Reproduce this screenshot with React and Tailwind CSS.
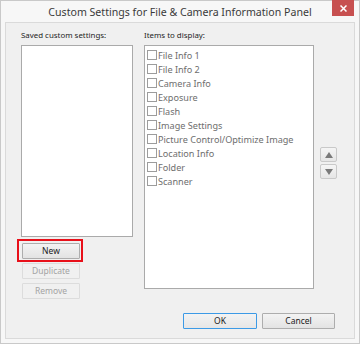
import React from 'react';

const items = [
  'File Info 1',
  'File Info 2',
  'Camera Info',
  'Exposure',
  'Flash',
  'Image Settings',
  'Picture Control/Optimize Image',
  'Location Info',
  'Folder',
  'Scanner',
];

const font = { fontFamily: '"Noto Sans", "Open Sans", sans-serif' };

function Btn({ children, disabled, primary, className = '' }) {
  return (
    <button
      className={`flex items-center justify-center h-[16px] text-[8.5px] leading-none border rounded-[1px]
        ${disabled
          ? 'border-[#dcdcdc] bg-[#f0f0f0] text-[#a3a3a3]'
          : primary
            ? 'border-[#3c9ae6] bg-gradient-to-b from-[#f3f3f3] to-[#e6e6e6] text-[#1a1a1a]'
            : 'border-[#adadad] bg-gradient-to-b from-[#f3f3f3] to-[#e3e3e3] text-[#1a1a1a]'} ${className}`}
    >
      {children}
    </button>
  );
}

export default function App() {
  return (
    <div className="w-[360px] h-[344px] bg-[#f7f7f7] border border-[#c9c9c9] flex flex-col select-none" style={font}>
      {/* Title bar */}
      <div className="relative h-[21px] shrink-0 flex items-center justify-center">
        <span className="text-[10.6px] text-[#3a3a3a] pt-[2px]">Custom Settings for File &amp; Camera Information Panel</span>
        <div className="absolute right-[5px] top-[-1px] w-[22px] h-[16px] bg-[#c75050] flex items-center justify-center">
          <svg width="7" height="7" viewBox="0 0 7 7">
            <path d="M0.5 0.5 L6.5 6.5 M6.5 0.5 L0.5 6.5" stroke="#fff" strokeWidth="1.5" />
          </svg>
        </div>
      </div>

      {/* Client area */}
      <div className="mx-[4px] h-[317px] border border-[#dadada] bg-[#f0f0f0] flex flex-col">
        <div className="flex pl-[15px] pt-[6px]">
          {/* Left column */}
          <div className="w-[112px] flex flex-col">
            <div className="h-[16px] text-[7.9px] text-[#1e1e1e] leading-[12px]">Saved custom settings:</div>
            <div className="h-[192px] bg-white border border-[#aaaaaa]" />
            <div className="mt-[6px] ml-[1px] flex flex-col gap-[4px]">
              <div className="relative">
                <Btn className="w-[58px]">New</Btn>
                <div className="absolute left-[-5px] top-[-4px] w-[66px] h-[23px] border-2 border-[#e8101a]" />
              </div>
              <Btn disabled className="w-[58px]">Duplicate</Btn>
              <Btn disabled className="w-[58px]">Remove</Btn>
            </div>
          </div>

          {/* Right column */}
          <div className="ml-[11px] w-[170px] flex flex-col">
            <div className="h-[16px] text-[7.9px] text-[#1e1e1e] leading-[12px]">Items to display:</div>
            <div className="h-[244px] bg-white border border-[#aaaaaa] pt-[4px] pl-[2px] flex flex-col">
              {items.map(it => (
                <div key={it} className="h-[14px] flex items-start gap-[1px]">
                  <div className="w-[10px] h-[10px] border border-[#9c9c9c] bg-white shrink-0" />
                  <span className="text-[9.1px] leading-[11px] text-[#6e6e6e] whitespace-nowrap">{it}</span>
                </div>
              ))}
            </div>
          </div>

          {/* Arrows */}
          <div className="ml-[6px] mt-[118px] flex flex-col gap-[2px]">
            <button className="w-[17px] h-[15px] border border-[#c9c9c9] rounded-[2px] bg-gradient-to-b from-[#f5f5f5] to-[#e6e6e6] flex items-center justify-center">
              <svg width="8" height="6" viewBox="0 0 8 6"><path d="M4 0 L8 6 L0 6 Z" fill="#7a7a7a" /></svg>
            </button>
            <button className="w-[17px] h-[15px] border border-[#c9c9c9] rounded-[2px] bg-gradient-to-b from-[#f5f5f5] to-[#e6e6e6] flex items-center justify-center">
              <svg width="8" height="6" viewBox="0 0 8 6"><path d="M0 0 L8 0 L4 6 Z" fill="#7a7a7a" /></svg>
            </button>
          </div>
        </div>

        {/* Footer */}
        <div className="mt-auto mb-[9px] mr-[19px] flex justify-end gap-[5px]">
          <Btn primary className="w-[74px] h-[15px]">OK</Btn>
          <Btn className="w-[73px] h-[15px]">Cancel</Btn>
        </div>
      </div>
    </div>
  );
}
